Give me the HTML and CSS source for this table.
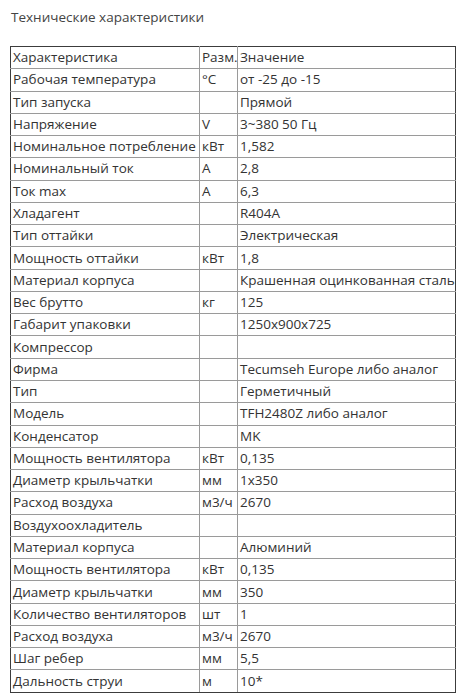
FILE: index.html
```html
<!DOCTYPE html>
<html lang="ru">
<head>
<meta charset="utf-8">
<title>Технические характеристики</title>
<link rel="stylesheet" href="styles.css">
</head>
<body>
<div class="page">
  <h1 class="title">Технические характеристики</h1>
  <table class="specs">
    <colgroup><col class="c1"><col class="c2"><col class="c3"></colgroup>
    <tbody>
      <tr><td>Характеристика</td><td>Разм.</td><td>Значение</td></tr>
      <tr><td>Рабочая температура</td><td>°C</td><td>от -25 до -15</td></tr>
      <tr><td>Тип запуска</td><td></td><td>Прямой</td></tr>
      <tr><td>Напряжение</td><td>V</td><td>3~380 50 Гц</td></tr>
      <tr><td>Номинальное потребление</td><td>кВт</td><td>1,582</td></tr>
      <tr><td>Номинальный ток</td><td>А</td><td>2,8</td></tr>
      <tr><td>Ток max</td><td>А</td><td>6,3</td></tr>
      <tr><td>Хладагент</td><td></td><td>R404A</td></tr>
      <tr><td>Тип оттайки</td><td></td><td>Электрическая</td></tr>
      <tr><td>Мощность оттайки</td><td>кВт</td><td>1,8</td></tr>
      <tr><td>Материал корпуса</td><td></td><td>Крашенная оцинкованная сталь</td></tr>
      <tr><td>Вес брутто</td><td>кг</td><td>125</td></tr>
      <tr><td>Габарит упаковки</td><td></td><td>1250x900x725</td></tr>
      <tr><td>Компрессор</td><td></td><td></td></tr>
      <tr><td>Фирма</td><td></td><td>Tecumseh Europe либо аналог</td></tr>
      <tr><td>Тип</td><td></td><td>Герметичный</td></tr>
      <tr><td>Модель</td><td></td><td>TFH2480Z либо аналог</td></tr>
      <tr><td>Конденсатор</td><td></td><td>MK</td></tr>
      <tr><td>Мощность вентилятора</td><td>кВт</td><td>0,135</td></tr>
      <tr><td>Диаметр крыльчатки</td><td>мм</td><td>1x350</td></tr>
      <tr><td>Расход воздуха</td><td>м3/ч</td><td>2670</td></tr>
      <tr><td>Воздухоохладитель</td><td></td><td></td></tr>
      <tr><td>Материал корпуса</td><td></td><td>Алюминий</td></tr>
      <tr><td>Мощность вентилятора</td><td>кВт</td><td>0,135</td></tr>
      <tr><td>Диаметр крыльчатки</td><td>мм</td><td>350</td></tr>
      <tr><td>Количество вентиляторов</td><td>шт</td><td>1</td></tr>
      <tr><td>Расход воздуха</td><td>м3/ч</td><td>2670</td></tr>
      <tr><td>Шаг ребер</td><td>мм</td><td>5,5</td></tr>
      <tr><td>Дальность струи</td><td>м</td><td>10*</td></tr>
    </tbody>
  </table>
</div>
</body>
</html>
```

FILE: styles.css
```css
html, body {
  margin: 0;
  padding: 0;
  background: #ffffff;
}
.page {
  padding: 8px 10px 0 10px;
  font-family: "Open Sans", "Noto Sans", sans-serif;
  color: #333333;
}
.title {
  margin: 0 0 0 1px;
  font-size: 13.5px;
  font-weight: 400;
  line-height: 18px;
  color: #444;
}
.specs {
  margin-top: 20px;
  width: 446px;
  border-collapse: collapse;
  border: 1px solid #3c3c3c;
  font-size: 13.5px;
  table-layout: fixed;
}
.c1 { width: 189px; }
.c2 { width: 38px; }
.c3 { width: auto; }
.specs tr {
  height: 22.28px;
}
.specs td {
  border: 1px solid #9a9a9a;
  padding: 0 0 1px 2px;
  line-height: 18px;
  white-space: nowrap;
  overflow: hidden;
  vertical-align: middle;
}
.specs tr:first-child td { border-top-color: #3c3c3c; }
.specs tr:last-child td { border-bottom-color: #3c3c3c; }
.specs td:first-child { border-left-color: #3c3c3c; }
.specs td:last-child { border-right-color: #3c3c3c; }
```
